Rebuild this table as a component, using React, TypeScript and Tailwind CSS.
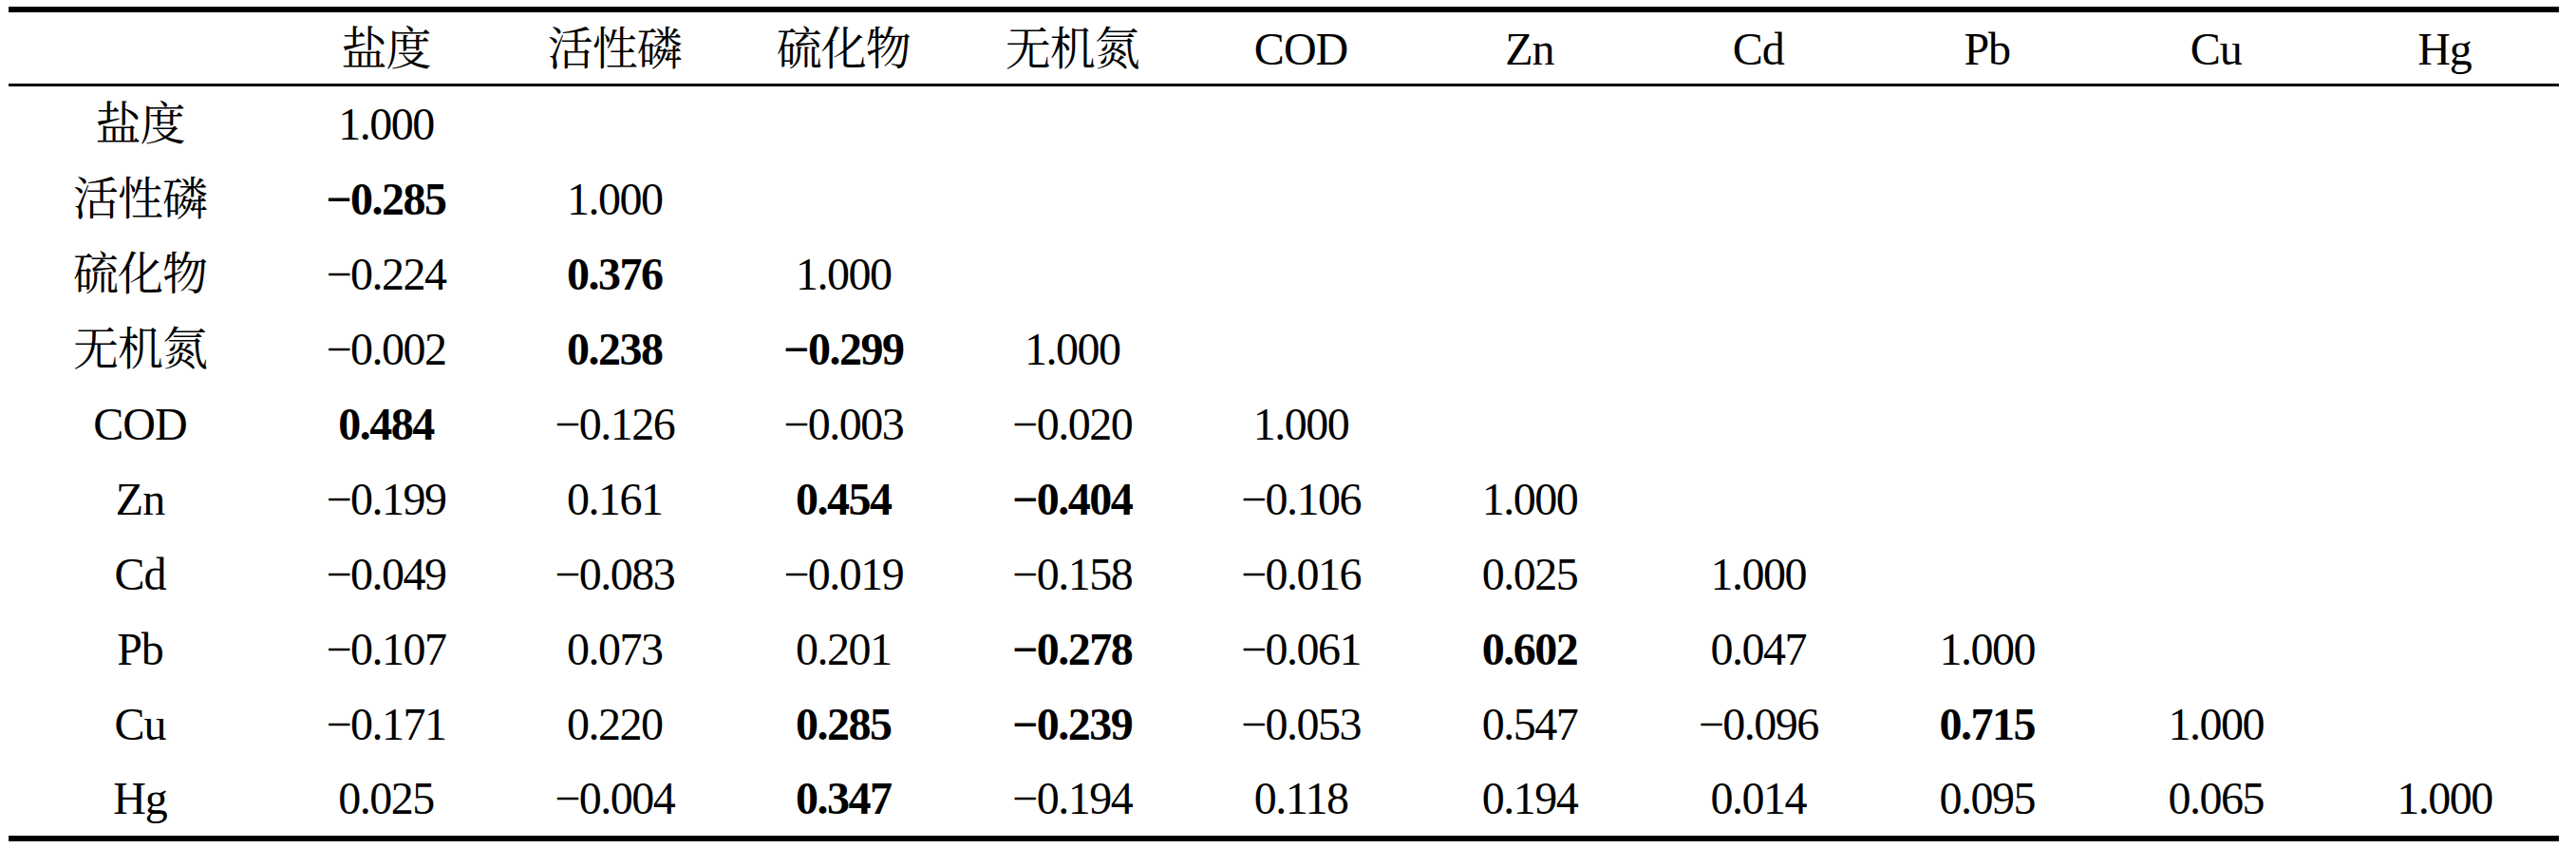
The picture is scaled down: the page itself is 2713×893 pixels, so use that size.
const headers = ["盐度", "活性磷", "硫化物", "无机氮", "COD", "Zn", "Cd", "Pb", "Cu", "Hg"];

// "b" prefix marks a significant (bold) coefficient
const rows: string[][] = [
  ["1.000"],
  ["b−0.285", "1.000"],
  ["−0.224", "b0.376", "1.000"],
  ["−0.002", "b0.238", "b−0.299", "1.000"],
  ["b0.484", "−0.126", "−0.003", "−0.020", "1.000"],
  ["−0.199", "0.161", "b0.454", "b−0.404", "−0.106", "1.000"],
  ["−0.049", "−0.083", "−0.019", "−0.158", "−0.016", "0.025", "1.000"],
  ["−0.107", "0.073", "0.201", "b−0.278", "−0.061", "b0.602", "0.047", "1.000"],
  ["−0.171", "0.220", "b0.285", "b−0.239", "−0.053", "0.547", "−0.096", "b0.715", "1.000"],
  ["0.025", "−0.004", "b0.347", "−0.194", "0.118", "0.194", "0.014", "0.095", "0.065", "1.000"],
];

const grid = "grid grid-cols-[277px_repeat(10,1fr)] items-center";

export default function App() {
  return (
    <main className="min-h-screen bg-white pl-[9px] pt-[7px] text-black [font-family:'Liberation_Serif','Noto_Serif_CJK_SC','Noto_Sans_CJK_SC',serif]">
      <div className="w-[2686px] text-[48px] leading-none">
        {/* 三线表：顶线粗、栏目线细、底线粗 */}
        <div className={`${grid} h-[84px] border-t-[6px] border-b-[3px] border-black pt-[2px]`}>
          <span />
          {headers.map((h) => (
            <span key={h} className="text-center tracking-[-1px]">
              {h}
            </span>
          ))}
        </div>

        <div className="border-b-[6px] border-black">
          {rows.map((cells, i) => (
            <div key={headers[i]} className={`${grid} h-[78.9px] pt-[2px]`}>
              <span className="text-center tracking-[-1px]">{headers[i]}</span>
              {headers.map((_, j) => {
                const v = cells[j];
                if (!v) return <span key={j} />;
                const bold = v.startsWith("b");
                return (
                  <span
                    key={j}
                    className={`text-center tracking-[-1.5px] ${bold ? "font-bold" : ""}`}
                  >
                    {bold ? v.slice(1) : v}
                  </span>
                );
              })}
            </div>
          ))}
        </div>
      </div>
    </main>
  );
}
